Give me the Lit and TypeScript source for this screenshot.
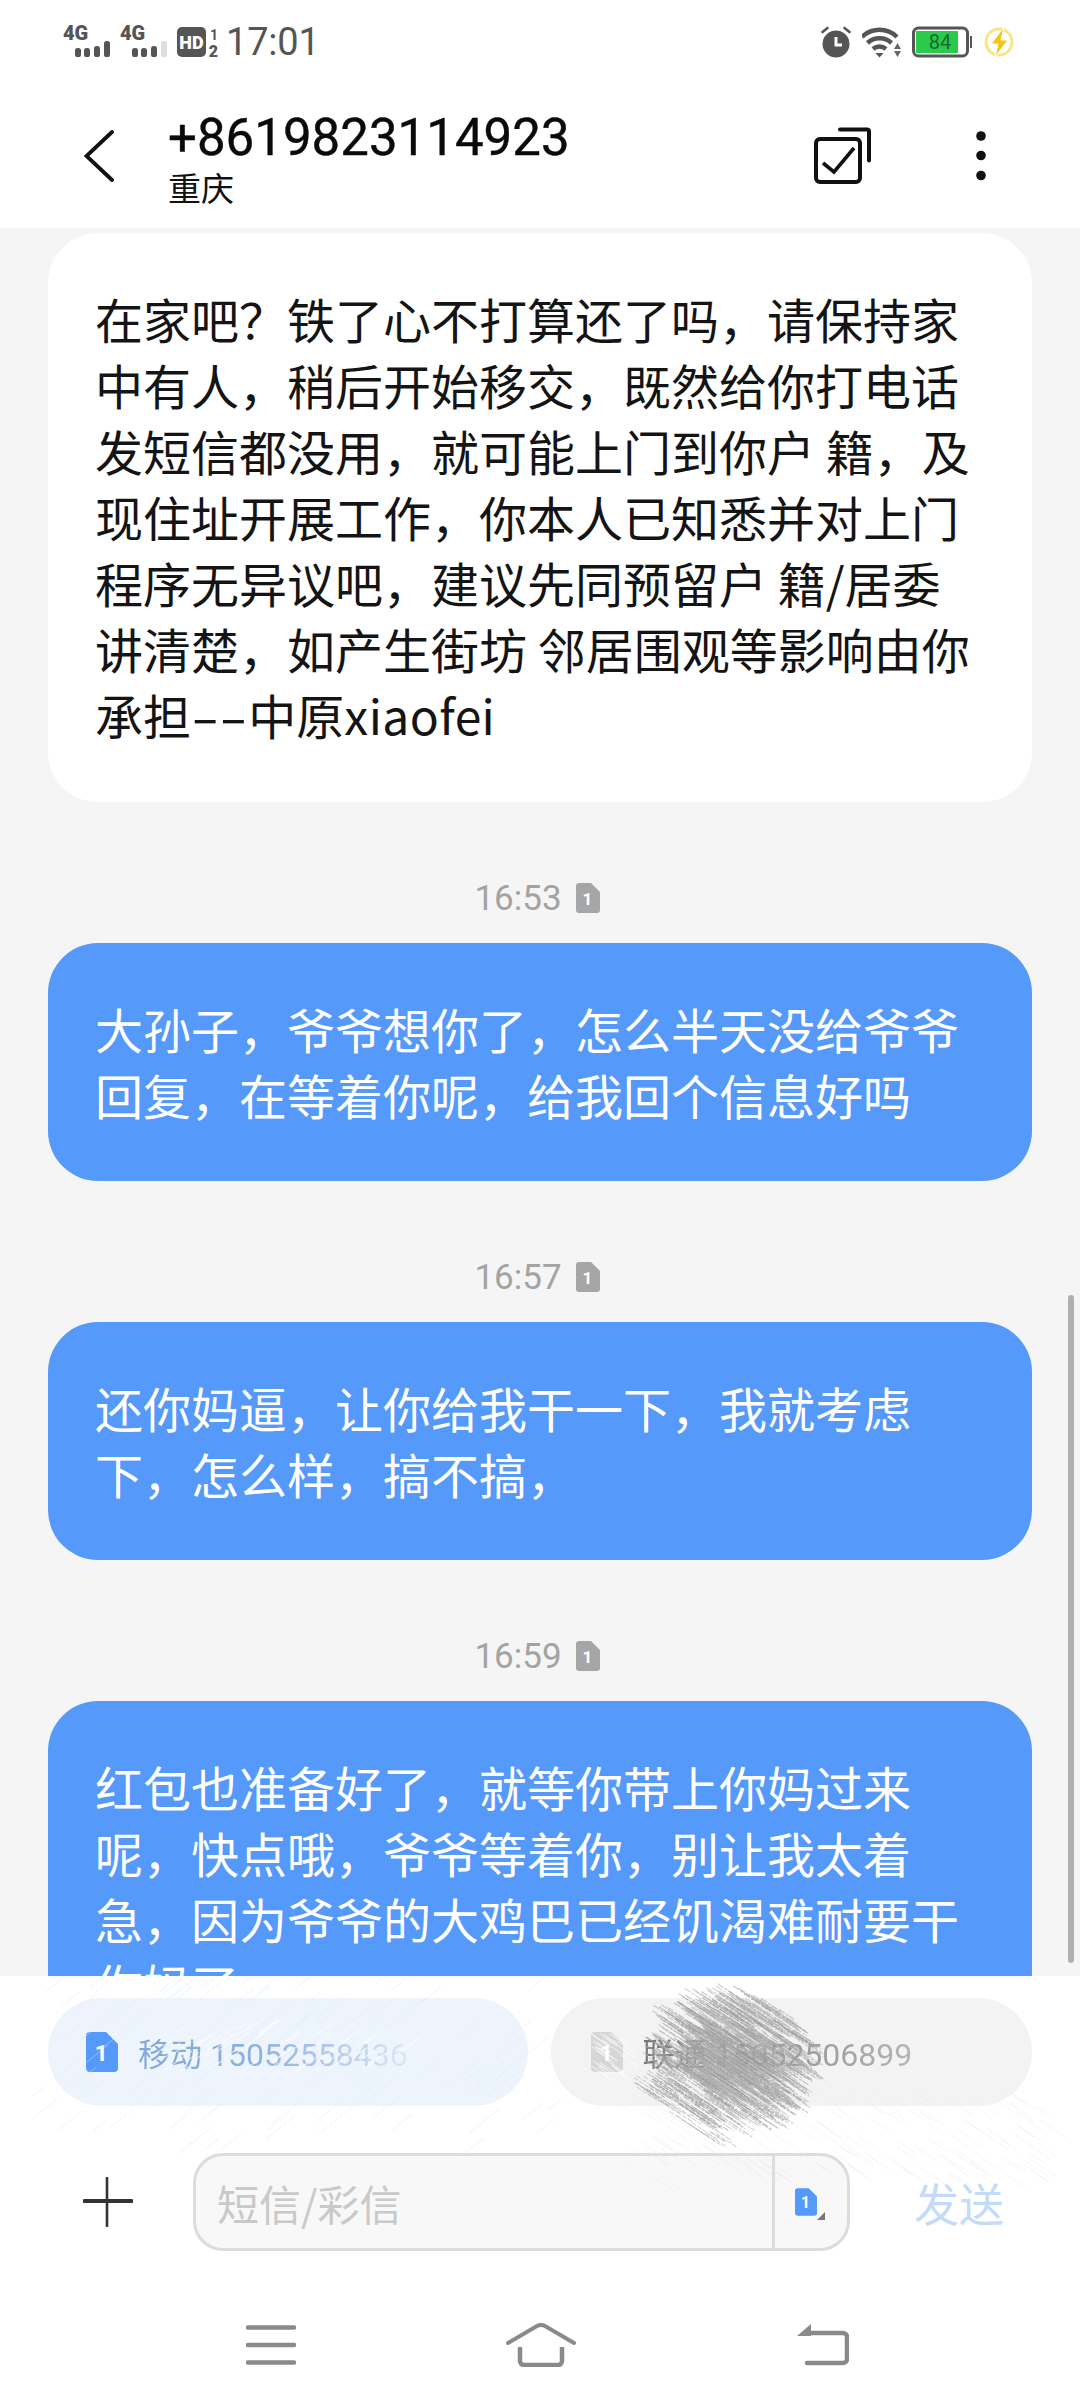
import { LitElement, html, css, svg } from 'lit';
import { customElement } from 'lit/decorators.js';

// small seeded generator so the pencil hatching comes out the same on every load
function seeded(start: number) {
  let s = start;
  return () => {
    s = (s * 16807) % 2147483647;
    return s / 2147483647;
  };
}

type Msg = { time?: string; text: unknown; incoming?: boolean };

const MESSAGES: Msg[] = [
  {
    incoming: true,
    text: html`在家吧？铁了心不打算还了吗，请保持家中有人，稍后开始移交，既然给你打电话发短信都没用，就可能上门到你户 籍，及现住址开展工作，你本人已知悉并对上门程序无异议吧，建议先同预留户 籍/居委讲清楚，如产生街坊 邻居围观等影响由你承担<span class="dash">--</span>中原<span class="latin">xiaofei</span>`,
  },
  { time: '16:53', text: '大孙子，爷爷想你了，怎么半天没给爷爷回复，在等着你呢，给我回个信息好吗' },
  { time: '16:57', text: '还你妈逼，让你给我干一下，我就考虑下，怎么样，搞不搞，' },
  {
    time: '16:59',
    text: '红包也准备好了，就等你带上你妈过来呢，快点哦，爷爷等着你，别让我太着急，因为爷爷的大鸡巴已经饥渴难耐要干你妈了',
  },
];

const simIcon = (fill: string, w: number, h: number) => html`
  <svg width=${w} height=${h} viewBox="0 0 24 30" aria-hidden="true">
    <path d="M3 0h12l9 9v18a3 3 0 0 1-3 3H3a3 3 0 0 1-3-3V3a3 3 0 0 1 3-3z" fill=${fill} />
    <text x="11.5" y="22" font-size="17" font-weight="700" fill="#fff" text-anchor="middle" font-family="Roboto, sans-serif">1</text>
  </svg>
`;

const BAR_X = [12, 21, 31, 41];
const BAR_H = [9, 9, 11, 16];

const signal = (bars: number) => html`
  <svg class="tall signal" width="47" height="44" viewBox="0 -6 47 44" aria-hidden="true">
    <text x="0" y="14" font-size="20" font-weight="900" fill="#555" font-family="Roboto, sans-serif">4G</text>
    ${BAR_X.map(
      (x, i) =>
        svg`<rect x=${x} y=${31 - BAR_H[i]} width="6" height=${BAR_H[i]} rx="2.6" fill=${i < bars ? '#555' : '#ddd'} />`,
    )}
  </svg>
`;

@customElement('sim-hatch')
export class SimHatch extends LitElement {
  static styles = css`
    :host {
      position: absolute;
      inset: 0;
      pointer-events: none;
    }
    svg {
      display: block;
    }
  `;

  // pale strokes over the whole strip, heavy grey scribble over the second number
  render() {
    const rnd = seeded(7421);
    const strokes: unknown[] = [];

    for (let i = 0; i < 110; i++) {
      const x = 30 + rnd() * 530;
      const y = 1982 + rnd() * 175;
      const len = 12 + rnd() * 20;
      strokes.push(
        svg`<line x1=${x} y1=${y} x2=${x + len} y2=${y - len * 0.8} stroke="#dbe7f7" stroke-width="1" opacity="0.45" />`,
      );
    }
    for (let i = 0; i < 170; i++) {
      const x = 620 + rnd() * 420;
      const y = 2090 + rnd() * 85;
      const len = 10 + rnd() * 20;
      strokes.push(
        svg`<line x1=${x} y1=${y} x2=${x + len} y2=${y + len * 0.7} stroke="#e8e8e8" stroke-width="1" opacity="0.4" />`,
      );
    }
    // worn-away patches in the carrier labels
    for (let i = 0; i < 90; i++) {
      const second = i % 3 === 0;
      const x = second ? 590 + rnd() * 32 : 139 + rnd() * 270;
      const y = 2030 + rnd() * 44;
      const len = 8 + rnd() * 14;
      strokes.push(
        svg`<line x1=${x} y1=${y} x2=${x + len} y2=${y + (second ? len * 0.7 : -len * 0.7)} stroke="#fff" stroke-width="1.2" opacity="0.55" />`,
      );
    }
    // scribble body: even fill inside an ellipse, a second pass thickens the core
    for (let i = 0; i < 1050; i++) {
      const core = i % 3 === 0;
      const angle = rnd() * Math.PI * 2;
      const r = Math.sqrt(rnd()) * (core ? 0.55 : 1);
      const cx = 733 + Math.cos(angle) * r * 78;
      const cy = 2060 + Math.sin(angle) * r * 64;
      const len = 14 + rnd() * 28;
      const grey = 145 + Math.floor(rnd() * 45);
      strokes.push(
        svg`<line x1=${cx - len / 2} y1=${cy - len * 0.33} x2=${cx + len / 2} y2=${cy + len * 0.33}
          stroke="rgb(${grey},${grey},${grey})" stroke-width="1.1" stroke-dasharray="7 1.5 3 1" opacity="0.6" />`,
      );
    }
    for (let i = 0; i < 40; i++) {
      const t = rnd();
      const cx = 625 + t * 90 + (rnd() - 0.5) * 14;
      const cy = 2073 + t * 58 + (rnd() - 0.5) * 14;
      const len = 14 + rnd() * 20;
      strokes.push(
        svg`<line x1=${cx} y1=${cy} x2=${cx + len} y2=${cy + len * 0.66} stroke="#a8a8a8" stroke-width="1" stroke-dasharray="5 1.5" opacity="0.6" />`,
      );
    }
    return html`<svg width="1080" height="432" viewBox="0 1976 1080 432" aria-hidden="true">${strokes}</svg>`;
  }
}

@customElement('app-root')
export class AppRoot extends LitElement {
  static styles = css`
    :host {
      display: block;
      position: relative;
      width: 1080px;
      height: 2408px;
      overflow: hidden;
      background: #fff;
      font-family: "Noto Sans CJK SC", Roboto, sans-serif;
    }
    .page {
      display: flex;
      flex-direction: column;
      height: 100%;
    }

    .status {
      height: 80px;
      padding: 26px 66px 0 63px;
      box-sizing: border-box;
      display: flex;
      align-items: flex-start;
      justify-content: space-between;
      flex: none;
    }
    .status-side {
      display: flex;
      align-items: center;
    }
    /* 44px tall artwork sitting in a 32px row, room for the glyph boxes */
    .tall {
      margin-top: -6px;
      margin-bottom: -6px;
    }
    .signal {
      margin-right: 10px;
    }
    .clock {
      font-family: Roboto, sans-serif;
      font-size: 38px;
      line-height: 32px;
      color: #555;
      margin-left: 7px;
      letter-spacing: -0.2px;
    }
    .alarm,
    .wifi {
      margin-right: 11px;
    }
    .battery {
      margin-right: 12px;
    }

    .header {
      height: 148px;
      flex: none;
      display: flex;
      align-items: center;
      box-sizing: border-box;
      padding-left: 84px;
    }
    .back {
      margin: 4px 54px 0 0;
    }
    .who {
      flex: 1;
      display: flex;
      flex-direction: column;
      margin-top: 9px;
    }
    .number {
      font-family: Roboto, sans-serif;
      font-size: 51px;
      line-height: 56px;
      color: #0a0a0a;
      -webkit-text-stroke: 0.4px #0a0a0a;
    }
    .place {
      font-size: 33px;
      line-height: 42px;
      color: #111;
    }
    .multi {
      margin: 3px 105px 0 0;
    }
    .dots {
      margin: 3px 94px 0 0;
    }

    .thread {
      flex: 1;
      min-height: 0;
      background: #f5f5f5;
      position: relative;
      overflow: hidden;
      padding: 5px 48px 0;
      display: flex;
      flex-direction: column;
    }
    .scrollbar {
      position: absolute;
      right: 6px;
      top: 1067px;
      width: 6px;
      height: 668px;
      border-radius: 3px;
      background: #b0b0b0;
    }
    .bubble {
      flex: none;
      box-sizing: border-box;
      border-radius: 50px;
      padding: 52px 50px 54px 47px;
      font-size: 48px;
      line-height: 66px;
      background: #5599fb;
      color: #fff;
    }
    .bubble.in {
      background: #fff;
      color: #141414;
      padding-bottom: 55px;
    }
    .dash {
      display: inline-block;
      transform: scaleX(1.7);
      transform-origin: left center;
      margin-right: 24px;
    }
    .latin {
      letter-spacing: 0.4px;
    }
    .stamp {
      flex: none;
      height: 141px;
      box-sizing: border-box;
      padding: 51px 6px 0 0;
      display: flex;
      align-items: center;
      justify-content: center;
      gap: 14px;
      font-family: Roboto, sans-serif;
      font-size: 35px;
      color: #a3a3a3;
    }

    .footer {
      flex: none;
      height: 432px;
      background: #fff;
      position: relative;
      display: flex;
      flex-direction: column;
    }
    .sims {
      display: flex;
      gap: 23px;
      padding: 22px 48px 0;
    }
    .sim {
      flex: 1;
      height: 108px;
      border-radius: 54px;
      display: flex;
      align-items: center;
      padding-left: 38px;
      gap: 20px;
      font-family: Roboto, "Noto Sans CJK SC", sans-serif;
      font-size: 32px;
      box-sizing: border-box;
    }
    .sim.one {
      background: #eef4fc;
    }
    .sim.two {
      background: #f3f3f3;
      padding-left: 40px;
    }
    .sim span {
      color: transparent;
      -webkit-background-clip: text;
      background-clip: text;
    }
    .sim.one span {
      background-image: linear-gradient(90deg, #80a8da 0%, #8db2df 45%, #dbe6f5 100%);
    }
    .sim.two span {
      background-image: linear-gradient(90deg, #777 0%, #888 30%, #b4b4b4 100%);
    }
    .compose {
      display: flex;
      align-items: center;
      padding: 47px 0 0 83px;
    }
    .plus {
      margin-right: 60px;
    }
    .field {
      width: 657px;
      height: 98px;
      box-sizing: border-box;
      border: 3px solid #dcdcdc;
      border-radius: 30px;
      background: #f8f8f8;
      display: flex;
      align-items: stretch;
      margin-right: 64px;
    }
    .hint {
      flex: 1;
      display: flex;
      align-items: center;
      padding-left: 21px;
      font-size: 42px;
      color: #c9c9c9;
      border-right: 3px solid #dcdcdc;
    }
    .picker {
      width: 72px;
      box-sizing: border-box;
      padding-right: 10px;
      position: relative;
      display: flex;
      align-items: center;
      justify-content: center;
    }
    .picker::after {
      content: '';
      position: absolute;
      left: 42px;
      top: 56px;
      border-left: 8px solid transparent;
      border-bottom: 8px solid #777;
    }
    .send {
      font-size: 45px;
      color: #c3dbf8;
    }
    .nav {
      display: grid;
      grid-template-columns: 260px 291px auto;
      align-items: center;
      justify-content: start;
      padding: 72px 0 0 246px;
    }
  `;

  private renderStatus() {
    return html`
      <div class="status">
        <div class="status-side">
          ${signal(4)} ${signal(3)}
          <svg class="tall" width="42" height="44" viewBox="0 -6 42 44" aria-hidden="true">
            <rect x="0" y="1" width="29" height="30" rx="5" fill="#555" />
            <text x="14.5" y="22.500" font-size="18" font-weight="900" fill="#fff" text-anchor="middle" font-family="Roboto, sans-serif">HD</text>
            <text x="37" y="14" font-size="14" font-weight="700" fill="#555" text-anchor="middle" font-family="Roboto, sans-serif">1</text>
            <text x="36.500" y="31" font-size="16" font-weight="900" fill="#555" text-anchor="middle" font-family="Roboto, sans-serif">2</text>
          </svg>
          <span class="clock">17:01</span>
        </div>
        <div class="status-side">
          <svg class="alarm" width="30" height="32" viewBox="0 0 30 32" aria-hidden="true">
            <circle cx="15" cy="18" r="13.500" fill="#555" />
            <path d="M1.500 6l5-4M28.500 6l-5-4" stroke="#555" stroke-width="2.600" stroke-linecap="round" />
            <path d="M15 11v8h6" fill="none" stroke="#fff" stroke-width="3" />
          </svg>
          <svg class="wifi" width="39" height="32" viewBox="0 0 39 32" aria-hidden="true">
            <path d="M0 11A25 25 0 0 1 35 11" fill="none" stroke="#555" stroke-width="4.500" />
            <path d="M5.500 17A17.500 17.500 0 0 1 29.500 17" fill="none" stroke="#555" stroke-width="4.500" />
            <path d="M11 23A10 10 0 0 1 24 23" fill="none" stroke="#555" stroke-width="4.500" />
            <path d="M13.500 27h8l-4 4.500z" fill="#555" />
            <path d="M35.500 17l-3.500 6h7zM35.500 31l-3.500-6h7z" fill="#666" />
          </svg>
          <svg class="battery" width="60" height="32" viewBox="0 0 60 32" aria-hidden="true">
            <rect x="1.500" y="2" width="54" height="28" rx="5" fill="#fff" stroke="#555" stroke-width="3" />
            <rect x="4" y="5" width="42" height="22" fill="#2bc94c" />
            <rect x="58" y="10" width="2" height="12" fill="#555" />
            <text x="28" y="23" font-size="20" fill="#146c2e" text-anchor="middle" font-family="Roboto, sans-serif">84</text>
          </svg>
          <svg width="30" height="32" viewBox="0 0 30 32" aria-hidden="true">
            <circle cx="15" cy="16" r="13" fill="none" stroke="#f7e48b" stroke-width="3" />
            <path d="M20 1L7 18h7l-3 13 13-17h-7z" fill="#f7c416" stroke="#fff" stroke-width="1" />
          </svg>
        </div>
      </div>
    `;
  }

  private renderHeader() {
    return html`
      <div class="header">
        <svg class="back" width="30" height="52" viewBox="0 0 30 52" aria-hidden="true">
          <path d="M28 2L2.500 26 28 50" fill="none" stroke="#111" stroke-width="3.800" stroke-linecap="round" />
        </svg>
        <div class="who">
          <span class="number">+8619823114923</span>
          <span class="place">重庆</span>
        </div>
        <svg class="multi" width="57" height="57" viewBox="0 0 57 57" aria-hidden="true">
          <path d="M26 2.500h27a2 2 0 0 1 2 2v29" fill="none" stroke="#111" stroke-width="4" stroke-linecap="round" />
          <rect x="2" y="12" width="44" height="43" rx="4" fill="#fff" stroke="#111" stroke-width="4" />
          <path d="M9 36l11 9 20-24" fill="none" stroke="#111" stroke-width="3.600" />
        </svg>
        <svg class="dots" width="10" height="50" viewBox="0 0 10 50" aria-hidden="true">
          <circle cx="5" cy="5" r="4.800" fill="#111" />
          <circle cx="5" cy="24.500" r="4.800" fill="#111" />
          <circle cx="5" cy="44.500" r="4.800" fill="#111" />
        </svg>
      </div>
    `;
  }

  private renderThread() {
    return html`
      <div class="thread">
        ${MESSAGES.map(
          (m) => html`
            ${m.time
              ? html`<div class="stamp"><span>${m.time}</span>${simIcon('#a6a6a6', 24, 30)}</div>`
              : ''}
            <div class="bubble ${m.incoming ? 'in' : ''}">${m.text}</div>
          `,
        )}
        <div class="scrollbar"></div>
      </div>
    `;
  }

  private renderFooter() {
    return html`
      <div class="footer">
        <div class="sims">
          <div class="sim one">${simIcon('#5599fb', 32, 40)}<span>移动 15052558436</span></div>
          <div class="sim two">${simIcon('#d6d6d6', 32, 40)}<span>联通 15052506899</span></div>
        </div>
        <div class="compose">
          <svg class="plus" width="50" height="50" viewBox="0 0 50 50" aria-hidden="true">
            <path d="M24 1v48" stroke="#333" stroke-width="2.600" stroke-linecap="round" />
            <path d="M1.500 24h47" stroke="#333" stroke-width="4" stroke-linecap="round" />
          </svg>
          <div class="field">
            <div class="hint">短信/彩信</div>
            <div class="picker">${simIcon('#5599fb', 22, 28)}</div>
          </div>
          <span class="send">发送</span>
        </div>
        <div class="nav">
          <svg width="50" height="40" viewBox="0 0 50 40" aria-hidden="true">
            <path d="M2 2.500h46M2 20h46M2 37.500h46" stroke="#8a8a8a" stroke-width="4.500" stroke-linecap="round" />
          </svg>
          <svg width="70" height="44" viewBox="0 0 70 44" aria-hidden="true">
            <path d="M2 20L31 3q4-2 8 0L68 20" fill="none" stroke="#8a8a8a" stroke-width="4" stroke-linecap="round" />
            <path d="M14 24v14a4 4 0 0 0 4 4h34a4 4 0 0 0 4-4V24" fill="none" stroke="#8a8a8a" stroke-width="4.500" />
          </svg>
          <svg width="52" height="42" viewBox="0 0 52 42" aria-hidden="true">
            <path d="M14 9h32a4 4 0 0 1 4 4v22a4 4 0 0 1-4 4H10" fill="none" stroke="#8a8a8a" stroke-width="4.500" stroke-linecap="round" />
            <path d="M14 0v12H0z" fill="#8a8a8a" />
          </svg>
        </div>
        <sim-hatch></sim-hatch>
      </div>
    `;
  }

  render() {
    return html`
      <div class="page">
        ${this.renderStatus()} ${this.renderHeader()} ${this.renderThread()} ${this.renderFooter()}
      </div>
    `;
  }
}
